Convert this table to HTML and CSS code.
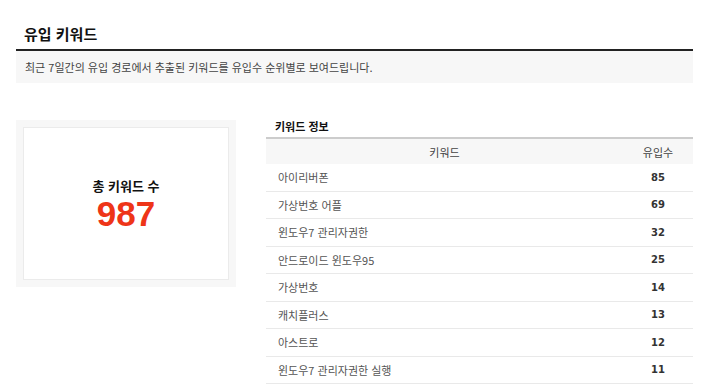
FILE: index.html
```html
<!DOCTYPE html>
<html lang="ko">
<head>
<meta charset="utf-8">
<link rel="stylesheet" href="styles.css">
</head>
<body>
<div class="page">
  <h1 class="title">유입 키워드</h1>
  <div class="desc">최근 7일간의 유입 경로에서 추출된 키워드를 유입수 순위별로 보여드립니다.</div>
  <div class="content">
    <div class="summary">
      <div class="summary-inner">
        <div class="summary-label">총 키워드 수</div>
        <div class="summary-value">987</div>
      </div>
    </div>
    <div class="info">
      <div class="info-title">키워드 정보</div>
      <table class="kw-table">
        <thead>
          <tr><th class="col-kw">키워드</th><th class="col-num">유입수</th></tr>
        </thead>
        <tbody>
          <tr><td class="kw">아이리버폰</td><td class="num">85</td></tr>
          <tr><td class="kw">가상번호 어플</td><td class="num">69</td></tr>
          <tr><td class="kw">윈도우7 관리자권한</td><td class="num">32</td></tr>
          <tr><td class="kw">안드로이드 윈도우95</td><td class="num">25</td></tr>
          <tr><td class="kw">가상번호</td><td class="num">14</td></tr>
          <tr><td class="kw">캐치플러스</td><td class="num">13</td></tr>
          <tr><td class="kw">아스트로</td><td class="num">12</td></tr>
          <tr><td class="kw">윈도우7 관리자권한 실행</td><td class="num">11</td></tr>
        </tbody>
      </table>
    </div>
  </div>
</div>
</body>
</html>
```
FILE: styles.css
```css
html, body {
  margin: 0;
  padding: 0;
  background: #fff;
}
body {
  font-family: "Noto Sans CJK KR", "Noto Sans", sans-serif;
  color: #333;
}
.page {
  width: 677px;
  padding: 0 0 0 16px;
}
.title {
  margin: 0;
  padding: 23px 0 0 8px;
  height: 26px;
  font-size: 15px;
  line-height: 22px;
  font-weight: bold;
  color: #111;
  border-bottom: 2px solid #222;
}
.desc {
  background: #f7f7f7;
  height: 32px;
  line-height: 32px;
  padding-left: 9px;
  font-size: 11px;
  color: #444;
}
.content {
  display: flex;
  margin-top: 37px;
  gap: 30px;
}
.summary {
  width: 206px;
  height: 153px;
  padding: 7px;
  background: #f7f7f7;
}
.summary-inner {
  height: 151px;
  background: #fff;
  border: 1px solid #ebebeb;
  display: flex;
  flex-direction: column;
  align-items: center;
  justify-content: center;
}
.summary-label {
  font-size: 13px;
  font-weight: bold;
  color: #111;
  line-height: 18px;
  margin-top: 2px;
}
.summary-value {
  font-family: "Liberation Sans", Arial, sans-serif;
  font-size: 35px;
  font-weight: bold;
  color: #ee3518;
  line-height: 38px;
}
.info {
  flex: 1;
}
.info-title {
  font-size: 11px;
  font-weight: bold;
  color: #111;
  line-height: 14px;
  margin: -1px 0 0 9px;
  height: 18px;
}
.kw-table {
  width: 100%;
  border-collapse: collapse;
  border-top: 2px solid #ccc;
  font-size: 11px;
}
.kw-table th {
  background: #f7f7f7;
  font-weight: normal;
  color: #444;
  height: 25px;
  padding: 0;
}
.col-num {
  width: 70px;
}
.kw-table td {
  height: 26.5px;
  padding: 0;
  border-bottom: 1px solid #e9e9e9;
  color: #555;
}
.kw {
  padding-left: 12px !important;
}
.num {
  text-align: center;
  font-family: "DejaVu Sans", Verdana, sans-serif;
  font-weight: bold;
  font-size: 10px;
  color: #333 !important;
}
```
